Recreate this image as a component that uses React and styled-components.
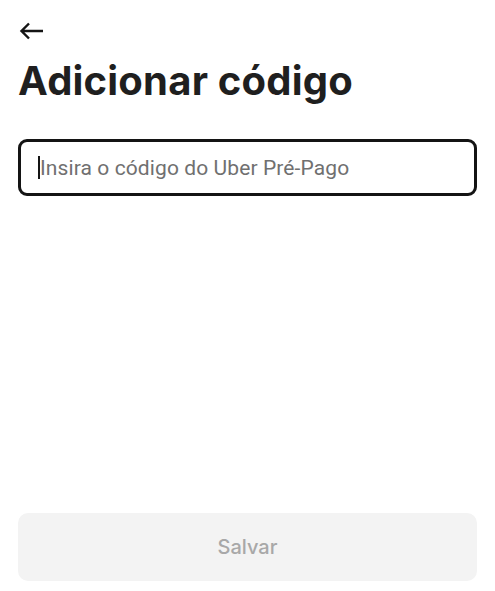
import React from "react";
import styled, { createGlobalStyle } from "styled-components";

const GlobalStyle = createGlobalStyle`
  html, body {
    margin: 0;
    padding: 0;
    background: #ffffff;
  }
  * {
    box-sizing: border-box;
  }
`;

const Screen = styled.div`
  display: flex;
  flex-direction: column;
  height: 100vh;
  padding: 0 18px 10px;
  font-family: "Inter", "Liberation Sans", sans-serif;
  color: #1f1f1f;
`;

const BackButton = styled.button`
  display: flex;
  align-items: center;
  width: 28px;
  height: 20px;
  margin-top: 21px;
  margin-left: 1px;
  padding: 0;
  border: none;
  background: none;
  cursor: pointer;
`;

const Title = styled.h1`
  margin: 15px 0 0;
  font-size: 40px;
  font-weight: 700;
  letter-spacing: 0.2px;
  line-height: 50px;
  color: #1f1f1f;
`;

const InputBox = styled.label`
  display: flex;
  align-items: center;
  height: 57px;
  margin-top: 33px;
  padding: 0 17px;
  border: 3px solid #141414;
  border-radius: 9px;
`;

const Caret = styled.span`
  width: 2px;
  height: 23px;
  background: #141414;
  flex-shrink: 0;
`;

const CodeInput = styled.input`
  flex: 1;
  min-width: 0;
  border: none;
  outline: none;
  padding: 0;
  font-family: "Roboto", "Liberation Sans", sans-serif;
  font-size: 21px;
  letter-spacing: 0.1px;
  color: #1f1f1f;
  caret-color: transparent;
  background: transparent;

  &::placeholder {
    color: #707070;
  }
`;

const Spacer = styled.div`
  flex: 1;
`;

const SaveButton = styled.button`
  height: 68px;
  border: none;
  border-radius: 10px;
  background: #f3f3f3;
  color: #a8a8a8;
  font-family: "Inter", "Liberation Sans", sans-serif;
  font-size: 20px;
  font-weight: 500;
  cursor: default;
`;

function App() {
  return (
    <>
      <GlobalStyle />
      <Screen>
        <BackButton aria-label="Voltar">
          <svg width="25" height="18" viewBox="0 0 25 18" fill="none">
            <path
              d="M24 9H3M10 1.5L2.5 9L10 16.5"
              stroke="#141414"
              strokeWidth="2.4"
            />
          </svg>
        </BackButton>
        <Title>Adicionar código</Title>
        <InputBox>
          <Caret />
          <CodeInput placeholder="Insira o código do Uber Pré-Pago" />
        </InputBox>
        <Spacer />
        <SaveButton disabled>Salvar</SaveButton>
      </Screen>
    </>
  );
}

export default App;
